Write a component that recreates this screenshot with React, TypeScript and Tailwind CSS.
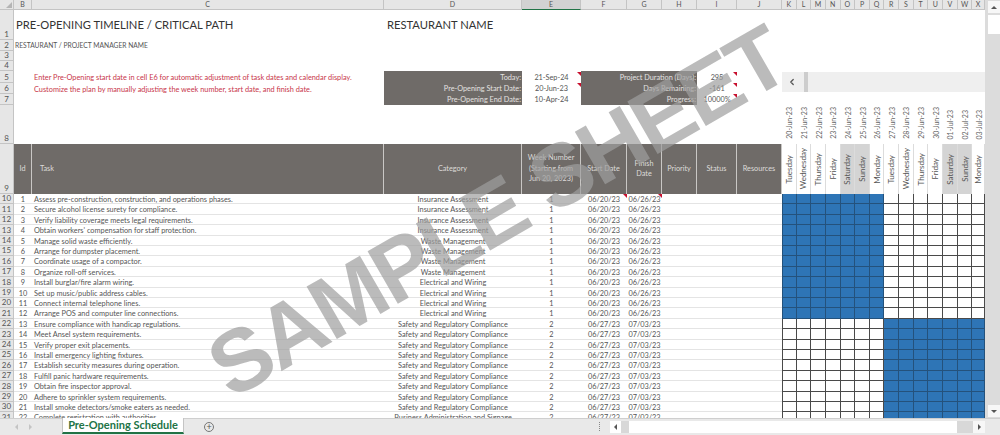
import { ChevronLeft } from "lucide-react";

// spreadsheet columns: row header, B, C, D, E, F, G, H, I, J, then the 14 calendar days
const COLS =
  "grid grid-rows-[100%] grid-cols-[14px_18px_352px_138px_59px_46px_35px_35px_40px_45px_repeat(13,14.65px)_12.6px]";

const LETTERS = ["B", "C", "D", "E", "F", "G", "H", "I", "J", "K", "L", "M", "N", "O", "P", "Q", "R", "S", "T", "U", "V", "W", "X"];

const DAYS = [
  ["20-Jun-23", "Tuesday"],
  ["21-Jun-23", "Wednesday"],
  ["22-Jun-23", "Thursday"],
  ["23-Jun-23", "Friday"],
  ["24-Jun-23", "Saturday"],
  ["25-Jun-23", "Sunday"],
  ["26-Jun-23", "Monday"],
  ["27-Jun-23", "Tuesday"],
  ["28-Jun-23", "Wednesday"],
  ["29-Jun-23", "Thursday"],
  ["30-Jun-23", "Friday"],
  ["01-Jul-23", "Saturday"],
  ["02-Jul-23", "Sunday"],
  ["03-Jul-23", "Monday"],
];

const INS = "Insurance Assessment";
const WASTE = "Waste Management";
const ELEC = "Electrical and Wiring";
const SAFE = "Safety and Regulatory Compliance";

const TASKS: [string, string][] = [
  ["Assess pre-construction, construction, and operations phases.", INS],
  ["Secure alcohol license surety for compliance.", INS],
  ["Verify liability coverage meets legal requirements.", INS],
  ["Obtain workers' compensation for staff protection.", INS],
  ["Manage solid waste efficiently.", WASTE],
  ["Arrange for dumpster placement.", WASTE],
  ["Coordinate usage of a compactor.", WASTE],
  ["Organize roll-off services.", WASTE],
  ["Install burglar/fire alarm wiring.", ELEC],
  ["Set up music/public address cables.", ELEC],
  ["Connect internal telephone lines.", ELEC],
  ["Arrange POS and computer line connections.", ELEC],
  ["Ensure compliance with handicap regulations.", SAFE],
  ["Meet Ansel system requirements.", SAFE],
  ["Verify proper exit placements.", SAFE],
  ["Install emergency lighting fixtures.", SAFE],
  ["Establish security measures during operation.", SAFE],
  ["Fulfill panic hardware requirements.", SAFE],
  ["Obtain fire inspector approval.", SAFE],
  ["Adhere to sprinkler system requirements.", SAFE],
  ["Install smoke detectors/smoke eaters as needed.", SAFE],
  ["Complete registration with authorities.", "Business Administration and Signage"],
];

function RowNum({ n }: { n: number }) {
  return (
    <div className="flex items-end justify-center bg-[#e6e6e6] border-r border-b border-[#c4c4c4] text-[8px] leading-[10px] text-[#555]">
      {n}
    </div>
  );
}

function Flag() {
  return <span className="absolute right-0 top-0 w-[4px] h-[4px] bg-[#c8102e] [clip-path:polygon(0_0,100%_0,100%_100%)]" />;
}

function StatLabel({ text }: { text: string }) {
  return <div className="h-[11px] leading-[11px] text-right pr-[1px]">{text}</div>;
}

function StatValue({ text, flag }: { text: string; flag?: boolean }) {
  return (
    <div className="relative h-[11px] leading-[11px] text-center text-[#555]">
      {text}
      {flag && <Flag />}
    </div>
  );
}

function HeaderCell({ children, left }: { children?: React.ReactNode; left?: boolean }) {
  return (
    <div
      className={`flex items-center border-r border-[#c9c7c5] text-[7.3px] leading-[10.4px] text-[#dedcda] px-[1px] whitespace-nowrap ${
        left ? "justify-start pl-[8px]" : "justify-center text-center"
      }`}
    >
      <div>{children}</div>
    </div>
  );
}

function TaskRow({ index, task, category }: { index: number; task: string; category: string }) {
  const firstWeek = index < 12;
  // rows average 10.4px in the picture, so they alternate between 10 and 11
  const tall = index % 5 === 1 || index % 5 === 3;
  return (
    <div className={`${COLS} ${tall ? "h-[11px]" : "h-[10px]"} text-[7.35px] leading-[11px] text-[#555]`}>
      <RowNum n={index + 10} />
      <div className="text-center border-b border-[#e4e4e4]">{index + 1}</div>
      <div className="pl-[2px] whitespace-nowrap border-b border-[#e4e4e4]">{task}</div>
      <div className="text-center whitespace-nowrap border-b border-[#e4e4e4]">{category}</div>
      <div className="text-center border-b border-[#e4e4e4]">{firstWeek ? 1 : 2}</div>
      <div className="relative text-center border-b border-[#e4e4e4]">
        {firstWeek ? "06/20/23" : "06/27/23"}
        {index === 0 && <Flag />}
      </div>
      <div className="relative text-center border-b border-[#e4e4e4]">
        {firstWeek ? "06/26/23" : "07/03/23"}
        {index === 0 && <Flag />}
      </div>
      <div className="border-b border-[#e4e4e4]" />
      <div className="border-b border-[#e4e4e4]" />
      <div className="border-b border-[#e4e4e4]" />
      {DAYS.map((d, i) => {
        const filled = firstWeek ? i < 7 : i >= 7;
        return (
          <div
            key={d[0]}
            className={`border-r border-b ${filled ? "bg-[#2e75b6] border-[#24527c]" : "bg-white border-[#4a4a4a]"} ${i === 0 ? "border-l" : ""}`}
          />
        );
      })}
    </div>
  );
}

function Sheet() {
  return (
    <div className="relative flex-1 min-w-0 overflow-hidden bg-white">
      {/* column letters */}
      <div className={`${COLS} h-[10px] text-[7px] leading-[9px] text-center text-[#555]`}>
        <div className="bg-[#e6e6e6] border-r border-b border-[#c4c4c4] relative">
          <span className="absolute right-[1px] bottom-[1px] w-[6px] h-[6px] bg-[#b5b5b5] [clip-path:polygon(100%_0,100%_100%,0_100%)]" />
        </div>
        {LETTERS.map((l) => (
          <div
            key={l}
            className={`border-r border-[#c4c4c4] border-b ${l === "E" ? "bg-[#d2d2d2] border-b-[#217346]" : "bg-[#e6e6e6]"}`}
          >
            {l}
          </div>
        ))}
      </div>

      {/* title rows */}
      <div className={`${COLS} h-[30px]`}>
        <RowNum n={1} />
        <div className="col-span-2 pl-[2px] pt-[6px] whitespace-nowrap text-[11.2px] leading-[18px] text-[#333]">
          PRE-OPENING TIMELINE / CRITICAL PATH
        </div>
        <div className="col-span-6 pl-[3px] pt-[6px] whitespace-nowrap text-[11.2px] leading-[18px] text-[#333]">
          RESTAURANT NAME
        </div>
      </div>
      <div className={`${COLS} h-[11px]`}>
        <RowNum n={2} />
        <div className="col-span-2 pl-[1px] whitespace-nowrap text-[6.7px] leading-[11px] text-[#555]">
          RESTAURANT / PROJECT MANAGER NAME
        </div>
      </div>
      <div className={`${COLS} h-[10px]`}>
        <RowNum n={3} />
      </div>
      <div className={`${COLS} h-[10px]`}>
        <RowNum n={4} />
      </div>

      {/* notes and project stats, rows 5 to 7 */}
      <div className="flex h-[34px]">
        <div className="grid grid-rows-[12px_11px_11px] w-[14px]">
          <RowNum n={5} />
          <RowNum n={6} />
          <RowNum n={7} />
        </div>
        <div className="w-[370px] pl-[20px] pt-[1px] text-[7.35px] leading-[12.2px] text-[#c8364a] whitespace-nowrap">
          <div>Enter Pre-Opening start date in cell E6 for automatic adjustment of task dates and calendar display.</div>
          <div>Customize the plan by manually adjusting the week number, start date, and finish date.</div>
        </div>
        <div className="w-[138px] pt-[1px] bg-[#6f6b68] text-[7.3px] text-[#e4e2e0]">
          <StatLabel text="Today:" />
          <StatLabel text="Pre-Opening Start Date:" />
          <StatLabel text="Pre-Opening End Date:" />
        </div>
        <div className="w-[59px] pt-[1px] text-[7.3px]">
          <StatValue text="21-Sep-24" flag />
          <StatValue text="20-Jun-23" flag />
          <StatValue text="10-Apr-24" />
        </div>
        <div className="w-[116px] pt-[1px] bg-[#6f6b68] text-[7.3px] text-[#e4e2e0]">
          <StatLabel text="Project Duration (Days):" />
          <StatLabel text="Days Remaining:" />
          <StatLabel text="Progress:" />
        </div>
        <div className="w-[40px] pt-[1px] text-[7.3px]">
          <StatValue text="295" flag />
          <StatValue text="-161" flag />
          <StatValue text="10000%" flag />
        </div>
      </div>

      {/* row 8: calendar dates */}
      <div className={`${COLS} h-[39px]`}>
        <RowNum n={8} />
        <div className="col-span-9" />
        {DAYS.map((d) => (
          <div key={d[0]} className="flex items-end justify-center pb-[5px]">
            <span className="[writing-mode:vertical-rl] rotate-180 text-[7px] leading-[10px] text-[#666] whitespace-nowrap">
              {d[0]}
            </span>
          </div>
        ))}
      </div>

      {/* row 9: table header */}
      <div className={`${COLS} h-[50px]`}>
        <RowNum n={9} />
        <div className="col-span-9 grid grid-cols-[18px_352px_138px_59px_46px_35px_35px_40px_45px] bg-[#6f6b68]">
          <HeaderCell>Id</HeaderCell>
          <HeaderCell left>Task</HeaderCell>
          <HeaderCell>Category</HeaderCell>
          <HeaderCell>
            Week Number
            <br />
            (Starting from
            <br />
            Jun 20, 2023)
          </HeaderCell>
          <HeaderCell>Start Date</HeaderCell>
          <HeaderCell>
            Finish
            <br />
            Date
          </HeaderCell>
          <HeaderCell>Priority</HeaderCell>
          <HeaderCell>Status</HeaderCell>
          <HeaderCell>Resources</HeaderCell>
        </div>
        {DAYS.map((d, i) => (
          <div
            key={d[0]}
            className={`flex items-center justify-center border-r border-[#dcdcdc] ${
              i === 4 || i === 5 || i === 11 || i === 12 ? "bg-[#d4d4d4]" : "bg-white"
            }`}
          >
            <span className="[writing-mode:vertical-rl] rotate-180 text-[8px] leading-[10px] text-[#555] whitespace-nowrap">
              {d[1]}
            </span>
          </div>
        ))}
      </div>

      {TASKS.map((t, i) => (
        <TaskRow key={t[0]} index={i} task={t[0]} category={t[1]} />
      ))}

      {/* calendar scroll control sits over rows 5 to 7 */}
      <div className="absolute left-[782px] top-[72px] w-[203px] h-[20px] flex items-center bg-[#efefef]">
        <ChevronLeft className="ml-[5px] w-[10px] h-[10px] text-[#555]" strokeWidth={3} />
        <div className="ml-[7px] w-[4px] h-[20px] bg-[#cdcdcd]" />
      </div>

      {/* sample sheet watermark */}
      <div className="absolute left-[497px] top-[212px] -translate-x-1/2 -translate-y-1/2 -rotate-[30deg] whitespace-nowrap font-['Liberation_Sans',sans-serif] font-bold text-[88px] tracking-[-3px] leading-none text-[rgba(158,158,158,0.7)] pointer-events-none">
        SAMPLE SHEET
      </div>
    </div>
  );
}

function VerticalBar() {
  return (
    <div className="w-[15px] bg-[#dcdcdc] flex flex-col items-end">
      <div className="w-[12px] h-[12px] mt-[1px] bg-[#f7f7f7] flex items-center justify-center">
        <span className="w-0 h-0 border-x-[3px] border-x-transparent border-b-[3px] border-b-[#555]" />
      </div>
      <div className="w-[12px] h-[19px] mt-[2px] bg-white" />
      <div className="mt-auto w-[12px] h-[12px] mb-[1px] bg-[#f7f7f7] flex items-center justify-center">
        <span className="w-0 h-0 border-x-[3px] border-x-transparent border-t-[3px] border-t-[#555]" />
      </div>
    </div>
  );
}

function TabBar() {
  return (
    <div className="relative h-[17px] flex items-start bg-[#e9e9e9] border-t border-[#cfcfcf]">
      <div className="w-[62px] flex items-center gap-[11px] pl-[15px] pt-[5px]">
        <span className="w-0 h-0 border-y-[3px] border-y-transparent border-r-[3px] border-r-[#c4c4c4]" />
        <span className="w-0 h-0 border-y-[3px] border-y-transparent border-l-[3px] border-l-[#c4c4c4]" />
      </div>
      <div className="w-[122px] h-[16px] -mt-[1px] bg-white border-x border-b-2 border-[#c4c4c4] border-b-[#217346] text-center text-[11px] leading-[14px] font-bold text-[#217346] whitespace-nowrap">
        Pre-Opening Schedule
      </div>
      <div className="ml-[20px] mt-[3px] w-[10px] h-[10px] rounded-full border border-[#777] flex items-center justify-center text-[9px] leading-[8px] text-[#555]">
        +
      </div>
      <div className="ml-auto flex items-center h-[16px] pb-[1px]">
        <div className="w-[1px] h-[9px] mr-[10px] border-l border-dotted border-[#888]" />
        <div className="w-[11px] h-[12px] bg-white flex items-center justify-center">
          <span className="w-0 h-0 border-y-[3px] border-y-transparent border-r-[3px] border-r-[#555]" />
        </div>
        <div className="w-[8px] h-[12px] bg-[#d8d8d8]" />
        <div className="w-[328px] h-[12px] bg-white" />
        <div className="w-[16px] h-[12px] bg-[#d8d8d8]" />
        <div className="w-[12px] h-[12px] bg-[#f7f7f7] flex items-center justify-center">
          <span className="w-0 h-0 border-y-[3px] border-y-transparent border-l-[3px] border-l-[#555]" />
        </div>
        <div className="w-[15px]" />
      </div>
    </div>
  );
}

export default function App() {
  return (
    <div className="w-[1000px] h-[435px] flex flex-col overflow-hidden bg-white font-['Lato','Liberation_Sans',sans-serif]">
      <div className="flex flex-1 min-h-0">
        <Sheet />
        <VerticalBar />
      </div>
      <TabBar />
    </div>
  );
}
